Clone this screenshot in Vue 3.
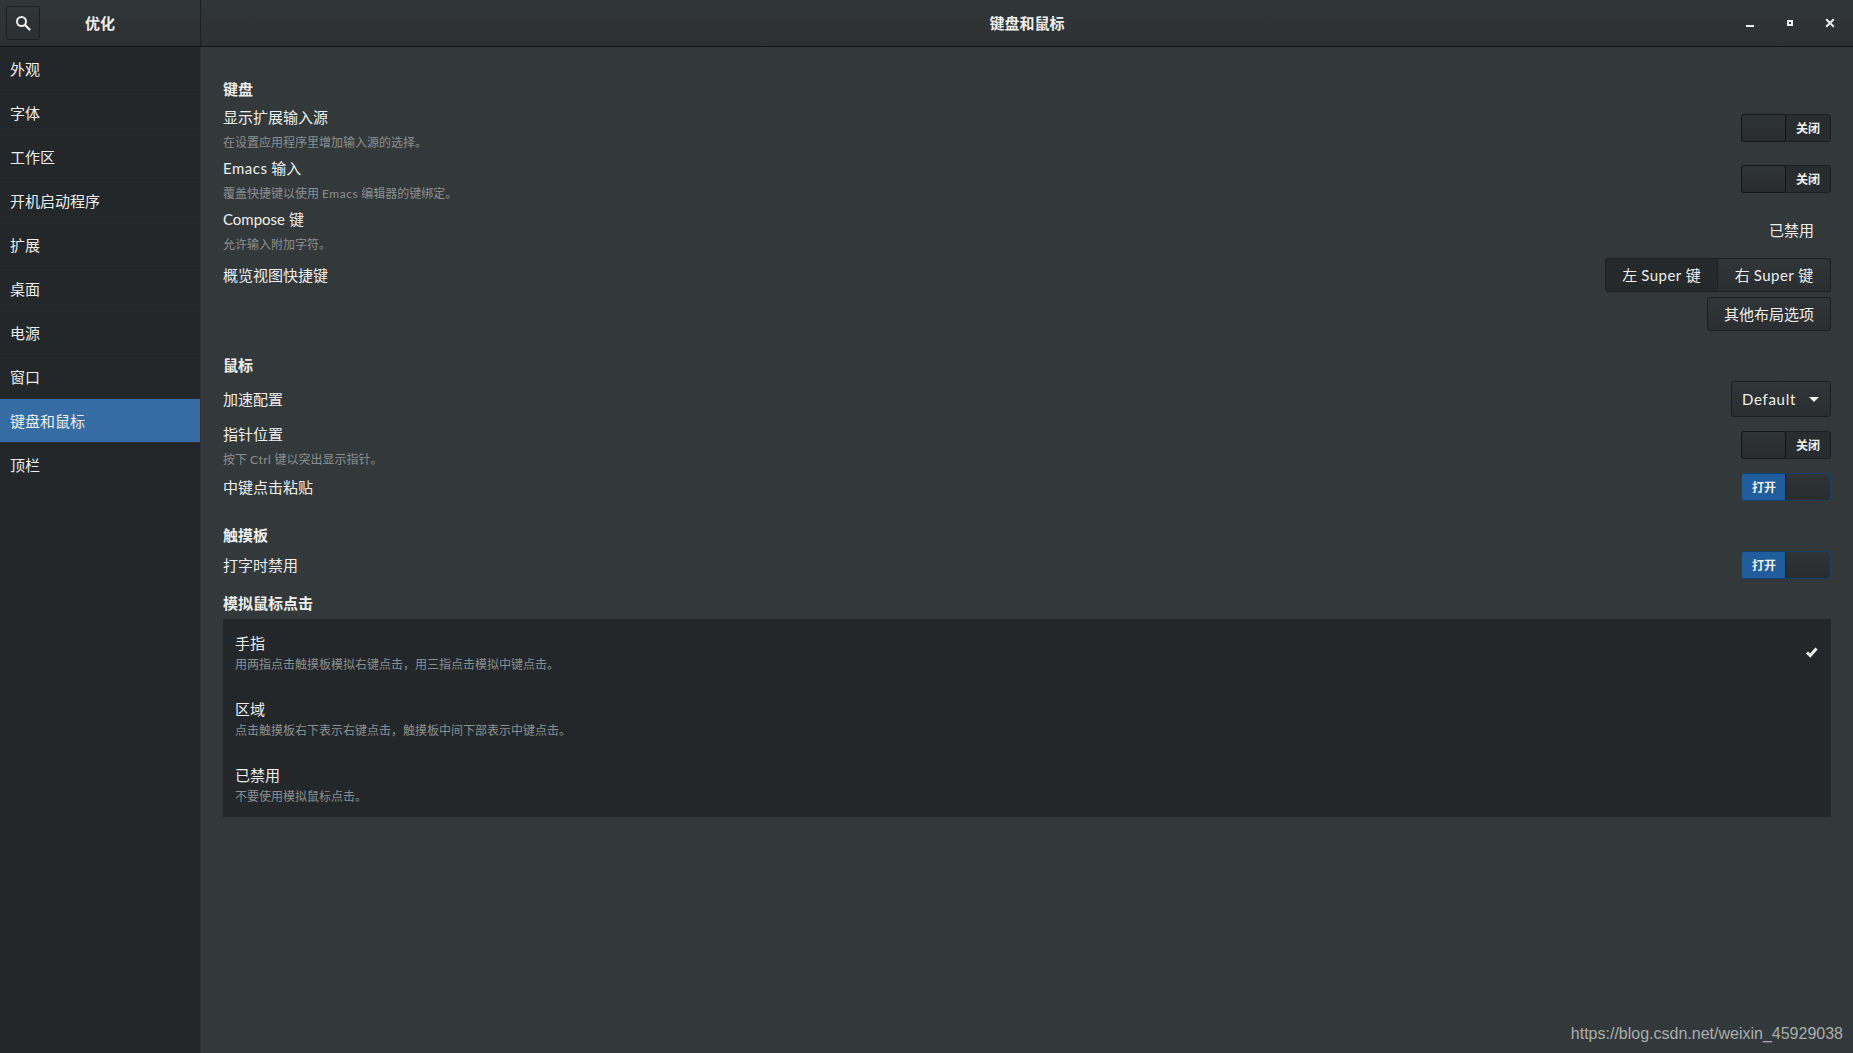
<script setup>
const navItems = ['外观', '字体', '工作区', '开机启动程序', '扩展', '桌面', '电源', '窗口', '键盘和鼠标', '顶栏']
const activeNav = '键盘和鼠标'

const clickModes = [
  { title: '手指', desc: '用两指点击触摸板模拟右键点击\uFF0C用三指点击模拟中键点击。', checked: true },
  { title: '区域', desc: '点击触摸板右下表示右键点击\uFF0C触摸板中间下部表示中键点击。', checked: false },
  { title: '已禁用', desc: '不要使用模拟鼠标点击。', checked: false }
]
</script>

<template>
  <div class="window">
    <header class="titlebar">
      <div class="titlebar-left">
        <button class="search-btn">
          <svg width="16" height="16" viewBox="0 0 16 16" fill="none" stroke="#eeeeec">
            <circle cx="6.5" cy="6.5" r="4.5" stroke-width="2" />
            <path d="M10 10l4.5 4.5" stroke-width="2.4" stroke-linecap="round" />
          </svg>
        </button>
        <span class="app-name">优化</span>
      </div>
      <div class="titlebar-main">
        <span class="window-title">键盘和鼠标</span>
        <div class="window-controls">
          <span class="win-btn">
            <svg width="12" height="12" viewBox="0 0 12 12"><rect x="2" y="8" width="8" height="2" fill="#eeeeec" /></svg>
          </span>
          <span class="win-btn">
            <svg width="12" height="12" viewBox="0 0 12 12"><path d="M3 3h6v6H3zM5 5v2h2V5z" fill="#eeeeec" fill-rule="evenodd" /></svg>
          </span>
          <span class="win-btn">
            <svg width="12" height="12" viewBox="0 0 12 12"><path d="M2.2 2.2l7.6 7.6M9.8 2.2l-7.6 7.6" stroke="#eeeeec" stroke-width="2" /></svg>
          </span>
        </div>
      </div>
    </header>

    <div class="body">
      <nav class="sidebar">
        <div
          v-for="item in navItems"
          :key="item"
          class="nav-item"
          :class="{ active: item === activeNav }"
        >{{ item }}</div>
      </nav>

      <main class="content">
        <h3 class="section first">键盘</h3>
        <div class="row">
          <div>
            <div class="label">显示扩展输入源</div>
            <div class="desc">在设置应用程序里增加输入源的选择。</div>
          </div>
          <div class="toggle off"><span class="thumb"></span><span class="state">关闭</span></div>
        </div>
        <div class="row">
          <div>
            <div class="label"><span class="latin">Emacs</span> 输入</div>
            <div class="desc">覆盖快捷键以使用 <span class="latin">Emacs</span> 编辑器的键绑定。</div>
          </div>
          <div class="toggle off"><span class="thumb"></span><span class="state">关闭</span></div>
        </div>
        <div class="row">
          <div>
            <div class="label">Compose 键</div>
            <div class="desc">允许输入附加字符。</div>
          </div>
          <span class="value">已禁用</span>
        </div>
        <div class="row overview">
          <div class="label">概览视图快捷键</div>
          <div class="overview-actions">
            <div class="btn-group">
              <button class="btn pressed">左 <span class="latin">Super</span> 键</button>
              <button class="btn">右 <span class="latin">Super</span> 键</button>
            </div>
            <button class="btn single">其他布局选项</button>
          </div>
        </div>

        <h3 class="section mouse">鼠标</h3>
        <div class="row accel">
          <div class="label">加速配置</div>
          <button class="btn combo">
            <span>Default</span>
            <svg width="10" height="5" viewBox="0 0 10 5"><path d="M0 0h10L5 5z" fill="#eeeeec" /></svg>
          </button>
        </div>
        <div class="row pointer">
          <div>
            <div class="label">指针位置</div>
            <div class="desc">按下 <span class="latin">Ctrl</span> 键以突出显示指针。</div>
          </div>
          <div class="toggle off"><span class="thumb"></span><span class="state">关闭</span></div>
        </div>
        <div class="row short paste">
          <div class="label">中键点击粘贴</div>
          <div class="toggle on"><span class="state">打开</span><span class="thumb"></span></div>
        </div>

        <h3 class="section touchpad">触摸板</h3>
        <div class="row short">
          <div class="label">打字时禁用</div>
          <div class="toggle on"><span class="state">打开</span><span class="thumb"></span></div>
        </div>

        <h3 class="section emulate">模拟鼠标点击</h3>
        <div class="listbox">
          <div v-for="mode in clickModes" :key="mode.title" class="list-item">
            <div>
              <div class="label">{{ mode.title }}</div>
              <div class="desc tight">{{ mode.desc }}</div>
            </div>
            <svg v-if="mode.checked" class="check" width="14" height="14" viewBox="0 0 14 14">
              <path d="M2 7.5l3.2 3L11.5 3.5" fill="none" stroke="#eeeeec" stroke-width="3" />
            </svg>
          </div>
        </div>
      </main>
    </div>

    <div class="watermark">https://blog.csdn.net/weixin_45929038</div>
  </div>
</template>

<style scoped>
.window {
  position: relative;
  width: 1853px;
  height: 1053px;
  display: flex;
  flex-direction: column;
  overflow: hidden;
  background: #33393b;
  color: #eeeeec;
  font-family: Lato, "Noto Sans CJK SC", sans-serif;
  font-size: 15px;
}

.latin {
  letter-spacing: 0.5px;
}

.titlebar {
  height: 47px;
  flex: none;
  display: flex;
  background: linear-gradient(to bottom, #313639, #2c3033);
  border-bottom: 1px solid #111314;
  box-sizing: border-box;
}

.titlebar-left {
  width: 201px;
  flex: none;
  box-sizing: border-box;
  border-right: 1px solid #1b1f20;
  display: flex;
  align-items: center;
  padding-left: 6px;
  position: relative;
}

.search-btn {
  width: 34px;
  height: 34px;
  padding: 0;
  display: flex;
  align-items: center;
  justify-content: center;
  border: 1px solid #1b1f20;
  border-radius: 3px;
  background: linear-gradient(to bottom, #303538, #2b2f32);
}

.app-name {
  width: 110px;
  margin-left: 5px;
  padding-bottom: 1px;
  text-align: center;
  font-weight: 700;
}

.titlebar-main {
  flex: 1;
  display: flex;
  align-items: center;
  justify-content: center;
  position: relative;
}

.window-title {
  padding-bottom: 1px;
  font-weight: 700;
}

.window-controls {
  position: absolute;
  right: 17px;
  top: 17px;
  display: flex;
  gap: 28px;
}

.win-btn {
  width: 12px;
  height: 12px;
  display: block;
}

.win-btn svg {
  display: block;
}

.body {
  flex: 1;
  display: flex;
  min-height: 0;
}

.sidebar {
  width: 200px;
  flex: none;
  background: #232729;
  border-right: 1px solid #2c3033;
}

.nav-item {
  height: 44px;
  box-sizing: border-box;
  padding: 0 10px;
  line-height: 45px;
  border-bottom: 1px solid #282c2e;
}

.nav-item:last-child {
  border-bottom: none;
}

.nav-item.active {
  background: #346ca3;
  background-clip: padding-box;
}

.content {
  flex: 1;
  min-width: 0;
  padding: 32px 22px 0 22px;
  box-sizing: border-box;
}

.section {
  margin: 0;
  height: 20px;
  line-height: 18px;
  font-size: 15px;
  font-weight: 700;
}

.section.first { margin-bottom: 4px; line-height: 20px; }
.section.mouse { margin-top: 25px; margin-bottom: 6px; }
.section.touchpad { margin-top: 25px; margin-bottom: 5px; }
.section.emulate { margin-top: 15px; margin-bottom: 5px; }

.row {
  height: 51px;
  display: flex;
  justify-content: space-between;
  align-items: flex-start;
  padding-top: 5px;
  box-sizing: border-box;
}

.label {
  height: 20px;
  line-height: 18px;
}

.row.short .label {
  line-height: 20px;
}

.desc {
  margin-top: 4px;
  height: 20px;
  line-height: 22px;
  font-size: 12px;
  color: #8a8f90;
}

.desc.tight {
  margin-top: 0;
}

.toggle {
  width: 90px;
  height: 28px;
  margin-top: 6px;
  display: flex;
  box-sizing: border-box;
  border: 1px solid #1b1f20;
  border-radius: 3px;
  background: #282c2e;
  font-size: 12px;
  font-weight: 700;
  line-height: 28px;
}

.state {
  flex: 1;
  text-align: center;
}

.thumb {
  width: 45px;
  flex: none;
  box-sizing: border-box;
  background: linear-gradient(to bottom, #2f3437, #282c2e);
}

.toggle.off .thumb {
  margin: -1px 0 -1px -1px;
  height: 28px;
  border: 1px solid #131516;
  border-radius: 3px;
}

.toggle.on {
  background: #215d9c;
  border-color: #163f6b;
}

.toggle.on .state {
  padding-left: 1px;
}

.toggle.on .thumb {
  border-left: 1px solid #1b1f20;
  border-radius: 0 2px 2px 0;
}

.value {
  margin-top: 9px;
  margin-right: 17px;
}

.row.overview {
  height: 73px;
  margin-top: 2px;
  padding-top: 8px;
}

.overview-actions {
  margin-top: -8px;
  display: flex;
  flex-direction: column;
  align-items: flex-end;
  gap: 5px;
}

.btn-group {
  display: flex;
}

.btn {
  height: 34px;
  padding: 0 16px 2px;
  box-sizing: border-box;
  border: 1px solid #1b1f20;
  border-radius: 3px;
  background: linear-gradient(to bottom, #303538, #2a2e31);
  color: #eeeeec;
  font: inherit;
  white-space: nowrap;
}

.btn-group .btn {
  width: 113px;
  padding: 0 0 2px;
  border-radius: 0 3px 3px 0;
  border-left: none;
}

.btn-group .pressed {
  background: #25292b;
  border-left: 1px solid #1b1f20;
  border-radius: 3px 0 0 3px;
}

.btn.single {
  width: 124px;
}

.row.accel {
  height: 35px;
  padding-top: 8px;
}

.btn.combo {
  width: 100px;
  height: 36px;
  margin-top: -9px;
  padding: 0 11px 0 10px;
  display: flex;
  align-items: center;
  justify-content: space-between;
  letter-spacing: 0.7px;
}

.row.pointer {
  margin-top: 3px;
}

.row.short {
  height: 28px;
  padding-top: 4px;
}

.row.short .toggle {
  margin-top: -4px;
}

.row.paste {
  margin-top: 2px;
}

.listbox {
  background: #232729;
}

.list-item {
  height: 66px;
  box-sizing: border-box;
  padding: 15px 12px 0 12px;
  display: flex;
  justify-content: space-between;
}

.check {
  margin-top: 11px;
}

.watermark {
  position: absolute;
  right: 10px;
  bottom: 10px;
  font-family: "Liberation Sans", sans-serif;
  font-size: 16px;
  color: #a9adad;
}
</style>
